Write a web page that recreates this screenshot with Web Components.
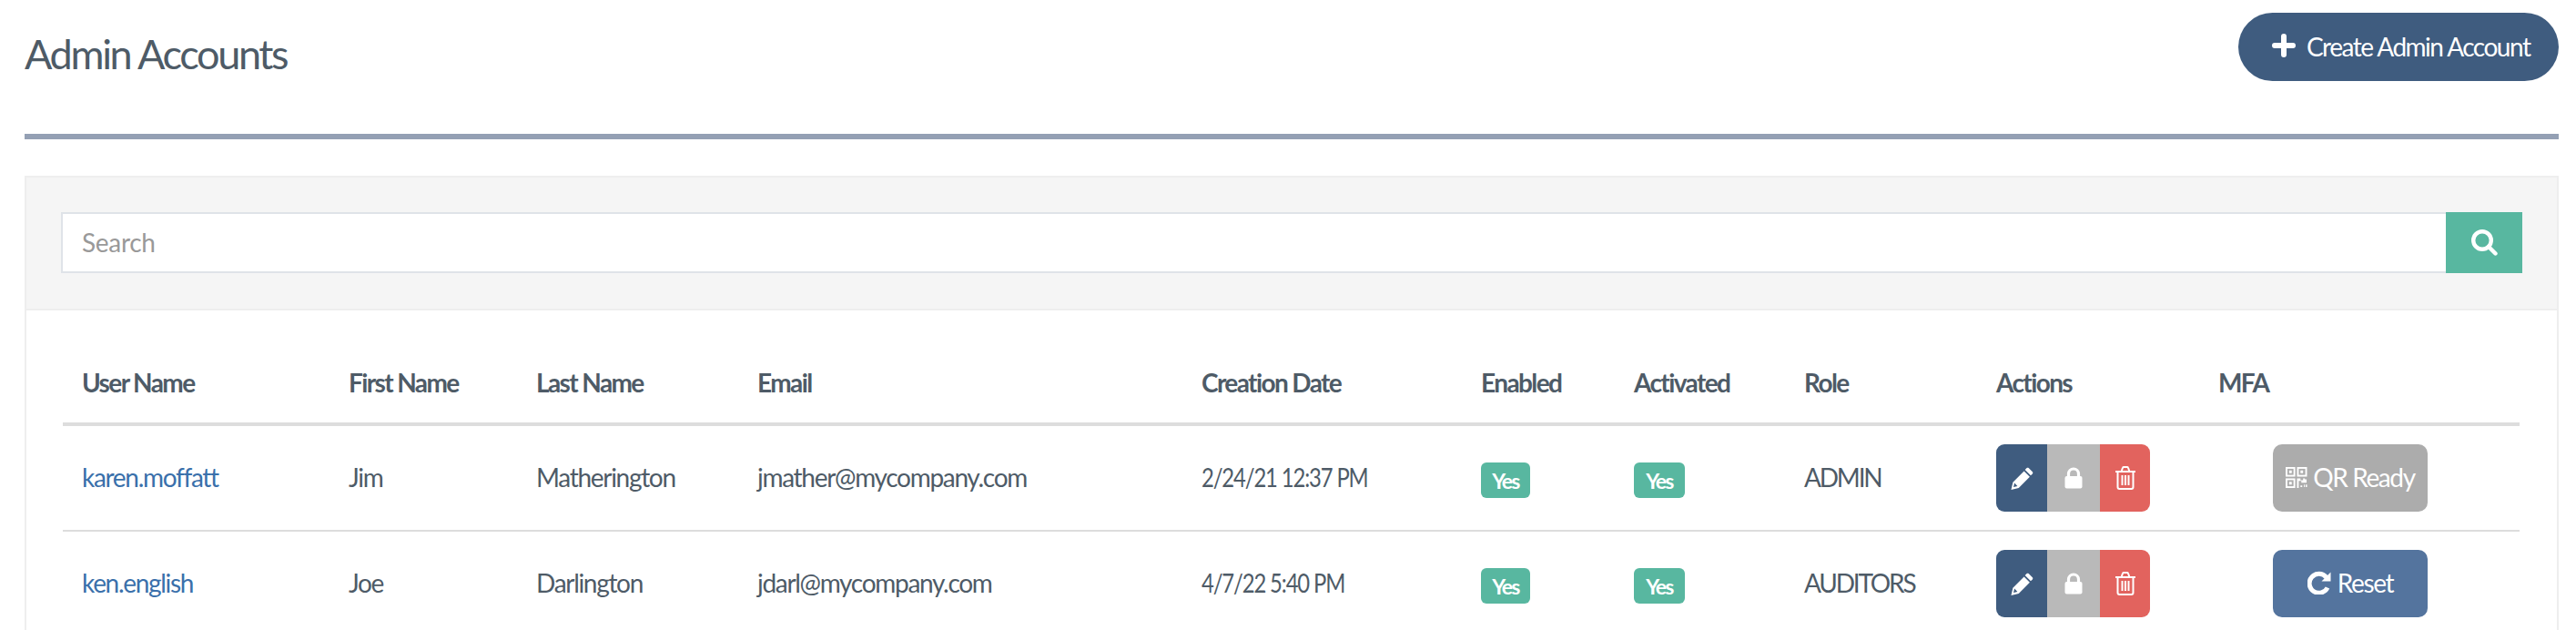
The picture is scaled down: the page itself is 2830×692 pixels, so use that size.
<!DOCTYPE html>
<html>
<head>
<meta charset="utf-8">
<title>Admin Accounts</title>
<style>
  html, body { margin: 0; padding: 0; background: #fff; overflow: hidden; height: 692px; }
  body { font-family: Lato, "Open Sans", sans-serif; font-size: 28px; color: #4e5b67; }
</style>
</head>
<body>
<admin-accounts>
  <page-header>Admin Accounts</page-header>
  <accounts-panel>
    <account-row>
      <a href="#">karen.moffatt</a><span>Jim</span><span>Matherington</span><span>jmather@mycompany.com</span><span class="date">2/24/21 12:37 PM</span>
      <yes-badge style="width:54px">Yes</yes-badge><yes-badge style="width:56px">Yes</yes-badge><span class="role">ADMIN</span><action-group></action-group><mfa-button kind="ready">QR Ready</mfa-button>
    </account-row>
    <account-row>
      <a href="#">ken.english</a><span>Joe</span><span>Darlington</span><span>jdarl@mycompany.com</span><span class="date">4/7/22 5:40 PM</span>
      <yes-badge style="width:54px">Yes</yes-badge><yes-badge style="width:56px">Yes</yes-badge><span class="role">AUDITORS</span><action-group></action-group><mfa-button kind="reset">Reset</mfa-button>
    </account-row>
  </accounts-panel>
</admin-accounts>

<script>
const COLS = '293px 206px 243px 488px 307px 168px 187px 211px 244px 1fr';

class AdminAccounts extends HTMLElement {
  connectedCallback() {
    this.attachShadow({ mode: 'open' });
    this.shadowRoot.innerHTML = `
      <style>
        :host { display: block; padding: 14px 19px 0 27px; }
      </style>
      <slot></slot>`;
  }
}

class PageHeader extends HTMLElement {
  connectedCallback() {
    this.attachShadow({ mode: 'open' });
    this.shadowRoot.innerHTML = `
      <style>
        :host { display: flex; justify-content: space-between; align-items: flex-start;
                height: 133px; border-bottom: 6px solid #94a0b4; margin-bottom: 40px; }
        h1 { margin: 0; padding-top: 18px; font-size: 45px; font-weight: 400; line-height: 54px; letter-spacing: -2.35px; color: #4e5b67; }
        button { display: flex; align-items: center; gap: 12px; height: 75px; width: 352px; padding: 0 0 0 37px;
                 border: 0; border-radius: 38px; background: #3f5c7f; color: #fff; font: inherit; font-size: 28px; letter-spacing: -1.5px; }
        svg { width: 26px; height: 26px; flex: none; margin-top: -4px; }
        span { margin-top: -2px; }
      </style>
      <h1><slot></slot></h1>
      <button><svg viewBox="0 0 26 26"><path d="M13 3v20M3 13h20" stroke="#fff" stroke-width="6" stroke-linecap="round" fill="none"/></svg><span>Create Admin Account</span></button>`;
  }
}

class AccountsPanel extends HTMLElement {
  connectedCallback() {
    this.attachShadow({ mode: 'open' });
    this.shadowRoot.innerHTML = `
      <style>
        :host { display: block; border: 2px solid #eee; border-bottom: 0; }
        .search { display: flex; height: 67px; padding: 38px 38px 39px 38px; background: #f5f5f5; border-bottom: 2px solid #eee; }
        input { flex: 1; min-width: 0; box-sizing: border-box; height: 67px; padding: 0 21px 2px; border: 2px solid #dfe3e8; border-right: 0;
                background: #fff; font: inherit; font-size: 28px; letter-spacing: -0.3px; color: #4e5b67; outline: 0; }
        input::placeholder { color: #999; opacity: 1; }
        .go { flex: none; width: 84px; height: 67px; display: flex; align-items: center; justify-content: center; background: #58b7a0; }
        .go svg { width: 29px; height: 29px; }
        .table { padding: 0 41px 0 40px; }
        .head { display: grid; grid-template-columns: ${COLS}; height: 127px; box-sizing: border-box; padding: 0 0 0 21px;
                border-bottom: 4px solid #ddd; align-items: end; font-weight: 700; }
        .head span { padding-bottom: 26px; line-height: 36px; font-size: 28px; letter-spacing: -1.6px; }
      </style>
      <div class="search">
        <input placeholder="Search">
        <div class="go"><svg viewBox="0 0 29 29"><circle cx="12" cy="12" r="9.8" fill="none" stroke="#fff" stroke-width="4.4"/><path d="M19 19l7.500 7.500" stroke="#fff" stroke-width="4.4" stroke-linecap="round"/></svg></div>
      </div>
      <div class="table">
        <div class="head">
          <span>User Name</span><span>First Name</span><span>Last Name</span><span>Email</span><span>Creation Date</span>
          <span>Enabled</span><span>Activated</span><span>Role</span><span>Actions</span><span>MFA</span>
        </div>
        <slot></slot>
      </div>`;
  }
}

class AccountRow extends HTMLElement {
  connectedCallback() {
    this.attachShadow({ mode: 'open' });
    this.shadowRoot.innerHTML = `
      <style>
        :host { display: grid; grid-template-columns: ${COLS}; height: 114px; padding-left: 21px;
                border-bottom: 2px solid #ddd; align-items: center; }
        ::slotted(a), ::slotted(span) { letter-spacing: -1.3px; padding-bottom: 2px; }
        ::slotted(a) { color: #3a70ab; text-decoration: none; }
        /* the digits in the reference are much narrower than Lato's */
        ::slotted(.date) { transform: scaleX(.85); transform-origin: left center; }
        ::slotted(.role) { letter-spacing: -2.2px; }
      </style>
      <slot></slot>`;
  }
}

class YesBadge extends HTMLElement {
  connectedCallback() {
    this.attachShadow({ mode: 'open' });
    this.shadowRoot.innerHTML = `
      <style>
        :host { display: flex; align-items: center; justify-content: center; justify-self: start; box-sizing: border-box; height: 39px; margin-top: 5px;
                border-radius: 6px; background: #58b7a0; color: #fff; font-size: 23px; font-weight: 700; letter-spacing: -1.7px; }
      </style>
      <slot></slot>`;
  }
}

class ActionGroup extends HTMLElement {
  connectedCallback() {
    this.attachShadow({ mode: 'open' });
    this.shadowRoot.innerHTML = `
      <style>
        :host { display: flex; justify-self: start; height: 74px; border-radius: 9px; overflow: hidden; }
        div { display: flex; align-items: center; justify-content: center; }
        .edit { width: 56px; background: #3f5c7f; }
        .lock { width: 58px; background: #b9b9b9; }
        .del { width: 55px; background: #e2635e; }
      </style>
      <div class="edit"><svg width="27" height="27" viewBox="0 0 28 28"><path fill="#fff" d="M21.4 2.2l4.4 4.4c.6.6.6 1.5 0 2.1l-2 2-6.5-6.5 2-2c.6-.6 1.5-.6 2.1 0zM16.2 5.800l6.500 6.500L10.100 24.900 1.500 27l2-8.700zM5.300 19.200l-1.100 4.600 4.500-1z"/></svg></div>
      <div class="lock"><svg width="20" height="24" viewBox="0 0 20 24"><path fill="none" stroke="#fff" stroke-width="3.2" d="M4.500 11V7.500a5.500 5.500 0 0 1 11 0V11"/><rect x="0.500" y="10" width="19" height="13.500" rx="2" fill="#fff"/></svg></div>
      <div class="del"><svg width="24" height="26" viewBox="0 0 24 26"><path fill="none" stroke="#fff" stroke-width="2" d="M1 6h22M3.500 6v17a2 2 0 0 0 2 2h13a2 2 0 0 0 2-2V6M7.500 6l1.500-4.200a1 1 0 0 1 1-.8h4a1 1 0 0 1 1 .8L16.500 6"/><path stroke="#fff" stroke-width="2" d="M8.500 10v11M12 10v11M15.500 10v11"/></svg></div>`;
  }
}

class MfaButton extends HTMLElement {
  connectedCallback() {
    this.attachShadow({ mode: 'open' });
    const ready = this.getAttribute('kind') === 'ready';
    const icon = ready
      ? `<svg width="24" height="23" viewBox="0 0 25 24"><g fill="none" stroke="#fff" stroke-width="2"><rect x="1" y="1" width="9" height="9"/><rect x="14" y="1" width="9.500" height="9"/><rect x="1" y="14" width="9" height="9"/></g><path fill="#fff" d="M4 4h3v3H4zM17 4h3v3h-3zM4 17h3v3H4zM13 13h4v2h3v-2h2v1h2v4h-6v-2h-3v8h-2zM17 21h2v2h-2zM21 20h1v3h-1zM23 20h1.500v3H23z"/></svg>`
      : `<svg width="27" height="26" viewBox="0 0 27 26"><path fill="none" stroke="#fff" stroke-width="5" d="M22 18.500a10.500 10.500 0 1 1-1.300-11.400"/><path fill="#fff" d="M25.500 1.500v10h-10z"/></svg>`;
    this.shadowRoot.innerHTML = `
      <style>
        :host { display: flex; align-items: center; justify-content: center; gap: 6px; justify-self: start; box-sizing: border-box; width: 170px; height: 74px; margin-left: 60px; padding-bottom: 2px;
                border-radius: 10px; color: #fff; background: ${ready ? '#acacac' : '#54749e'}; letter-spacing: -1.4px; }
        svg { flex: none; }
      </style>
      ${icon}<slot></slot>`;
  }
}

customElements.define('admin-accounts', AdminAccounts);
customElements.define('page-header', PageHeader);
customElements.define('accounts-panel', AccountsPanel);
customElements.define('account-row', AccountRow);
customElements.define('yes-badge', YesBadge);
customElements.define('action-group', ActionGroup);
customElements.define('mfa-button', MfaButton);
</script>
</body>
</html>
